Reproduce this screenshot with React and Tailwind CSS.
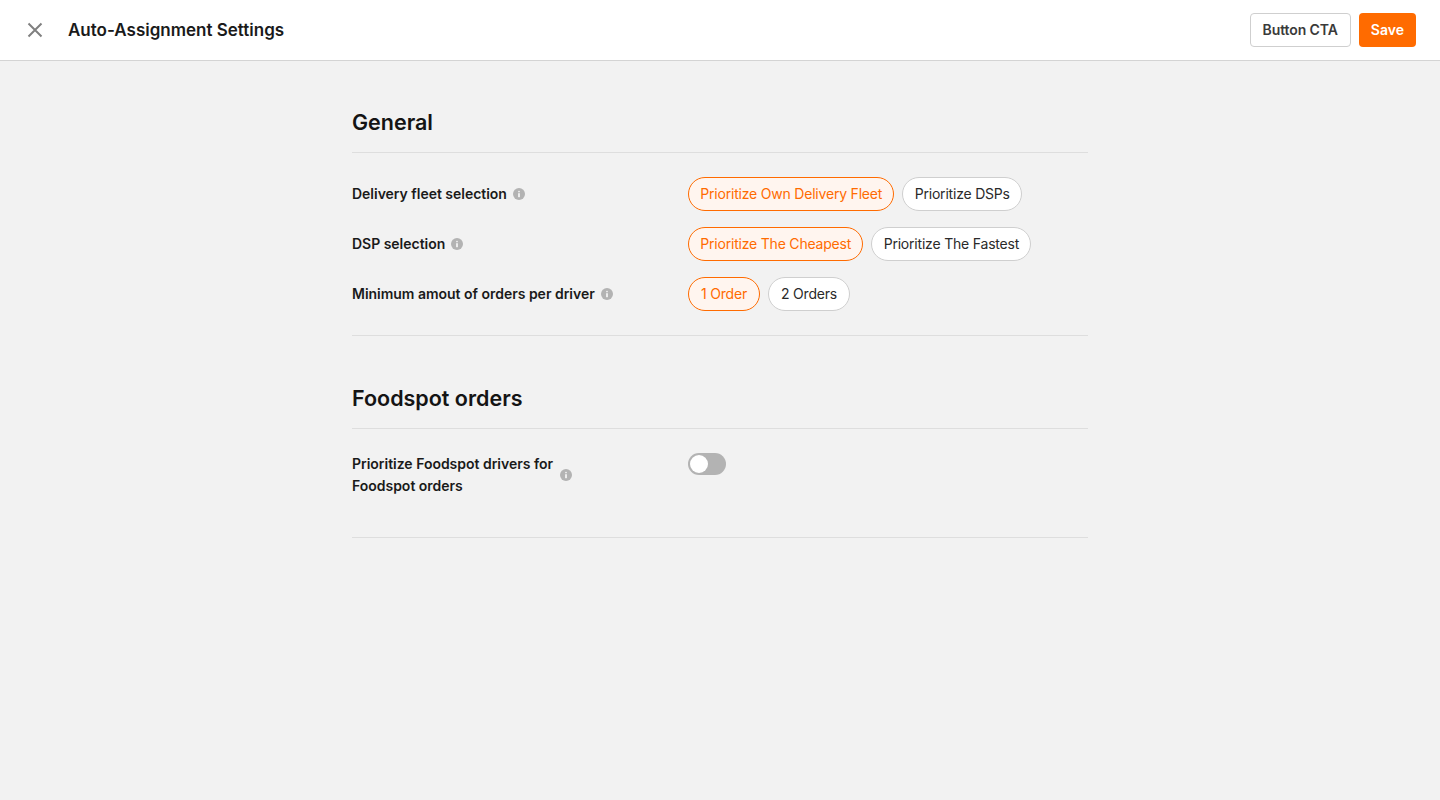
import React, { useState } from 'react';

const InfoIcon = () => (
  <svg width="12" height="12" viewBox="0 0 12 12" className="shrink-0">
    <circle cx="6" cy="6" r="6" fill="#b3b3b3" />
    <rect x="5.1" y="5.2" width="1.8" height="4" fill="#f2f2f2" />
    <rect x="5.1" y="2.7" width="1.8" height="1.7" rx="0.8" fill="#f2f2f2" />
  </svg>
);

const Pill = ({ active, pad, children }) => (
  <button
    className={`h-[34px] rounded-full border text-sm leading-5 tracking-[-0.2px] ${pad} ${
      active ? 'border-[#ff6b00] bg-[#fff5ef] text-[#ff6b00]' : 'border-[#cfcfcf] bg-white text-[#2a2a2a]'
    }`}
  >
    {children}
  </button>
);

const SettingRow = ({ label, options, pad = 'px-[11.25px]' }) => (
  <div className="flex items-center h-[34px]">
    <div className="w-[336px] flex items-center gap-[6px] text-sm leading-5 font-semibold tracking-[-0.02px] text-[#1a1a1a]">
      <span>{label}</span>
      <InfoIcon />
    </div>
    <div className="flex gap-2">
      {options.map((o, i) => (
        <Pill key={o} active={i === 0} pad={pad}>{o}</Pill>
      ))}
    </div>
  </div>
);

export default function App() {
  const [on] = useState(false);

  return (
    <div className="min-h-screen bg-[#f2f2f2] font-['Inter',sans-serif]">
      {/* Top bar */}
      <div className="h-[61px] bg-white border-b border-[#d4d4d4] flex items-center justify-between px-6">
        <div className="flex items-center gap-[22px]">
          <svg width="22" height="22" viewBox="0 0 22 22" fill="none" stroke="#808080" strokeWidth="2">
            <path d="M4.5 4.5 17.5 17.5M17.5 4.5 4.5 17.5" />
          </svg>
          <h1 className="text-[17px] leading-[26px] font-semibold text-[#1a1a1a]">Auto-Assignment Settings</h1>
        </div>
        <div className="flex gap-2">
          <button className="h-[34px] px-3 rounded border border-[#cfcfcf] bg-white text-sm font-semibold tracking-[-0.1px] text-[#3a3a3a]">Button CTA</button>
          <button className="h-[34px] px-3 rounded bg-[#ff6b00] text-sm font-semibold text-white">Save</button>
        </div>
      </div>

      <div className="w-[736px] mx-auto">
        {/* General */}
        <h2 className="mt-[47px] text-[21.5px] leading-7 font-semibold text-[#141414]">General</h2>
        <div className="mt-4 border-t border-[#dedede] pt-6 pb-6 border-b flex flex-col gap-4">
          <SettingRow label="Delivery fleet selection" options={['Prioritize Own Delivery Fleet', 'Prioritize DSPs']} />
          <SettingRow label="DSP selection" options={['Prioritize The Cheapest', 'Prioritize The Fastest']} />
          <SettingRow label="Minimum amout of orders per driver" options={['1 Order', '2 Orders']} pad="px-3" />
        </div>

        {/* Foodspot orders */}
        <h2 className="mt-12 text-[21.5px] leading-7 font-semibold text-[#141414]">Foodspot orders</h2>
        <div className="mt-4 border-t border-b border-[#dedede] h-[110px] pt-6 flex">
          <div className="w-[336px] flex items-center gap-[6px] h-[44px] text-sm leading-[22px] font-semibold tracking-[-0.02px] text-[#1a1a1a]">
            <span className="w-[202px]">Prioritize Foodspot drivers for Foodspot orders</span>
            <InfoIcon />
          </div>
          <div className={`w-[38px] h-[22px] rounded-full p-[2px] ${on ? 'bg-[#ff6b00]' : 'bg-[#b3b3b3]'}`}>
            <div className="w-[18px] h-[18px] rounded-full bg-white" />
          </div>
        </div>
      </div>
    </div>
  );
}
